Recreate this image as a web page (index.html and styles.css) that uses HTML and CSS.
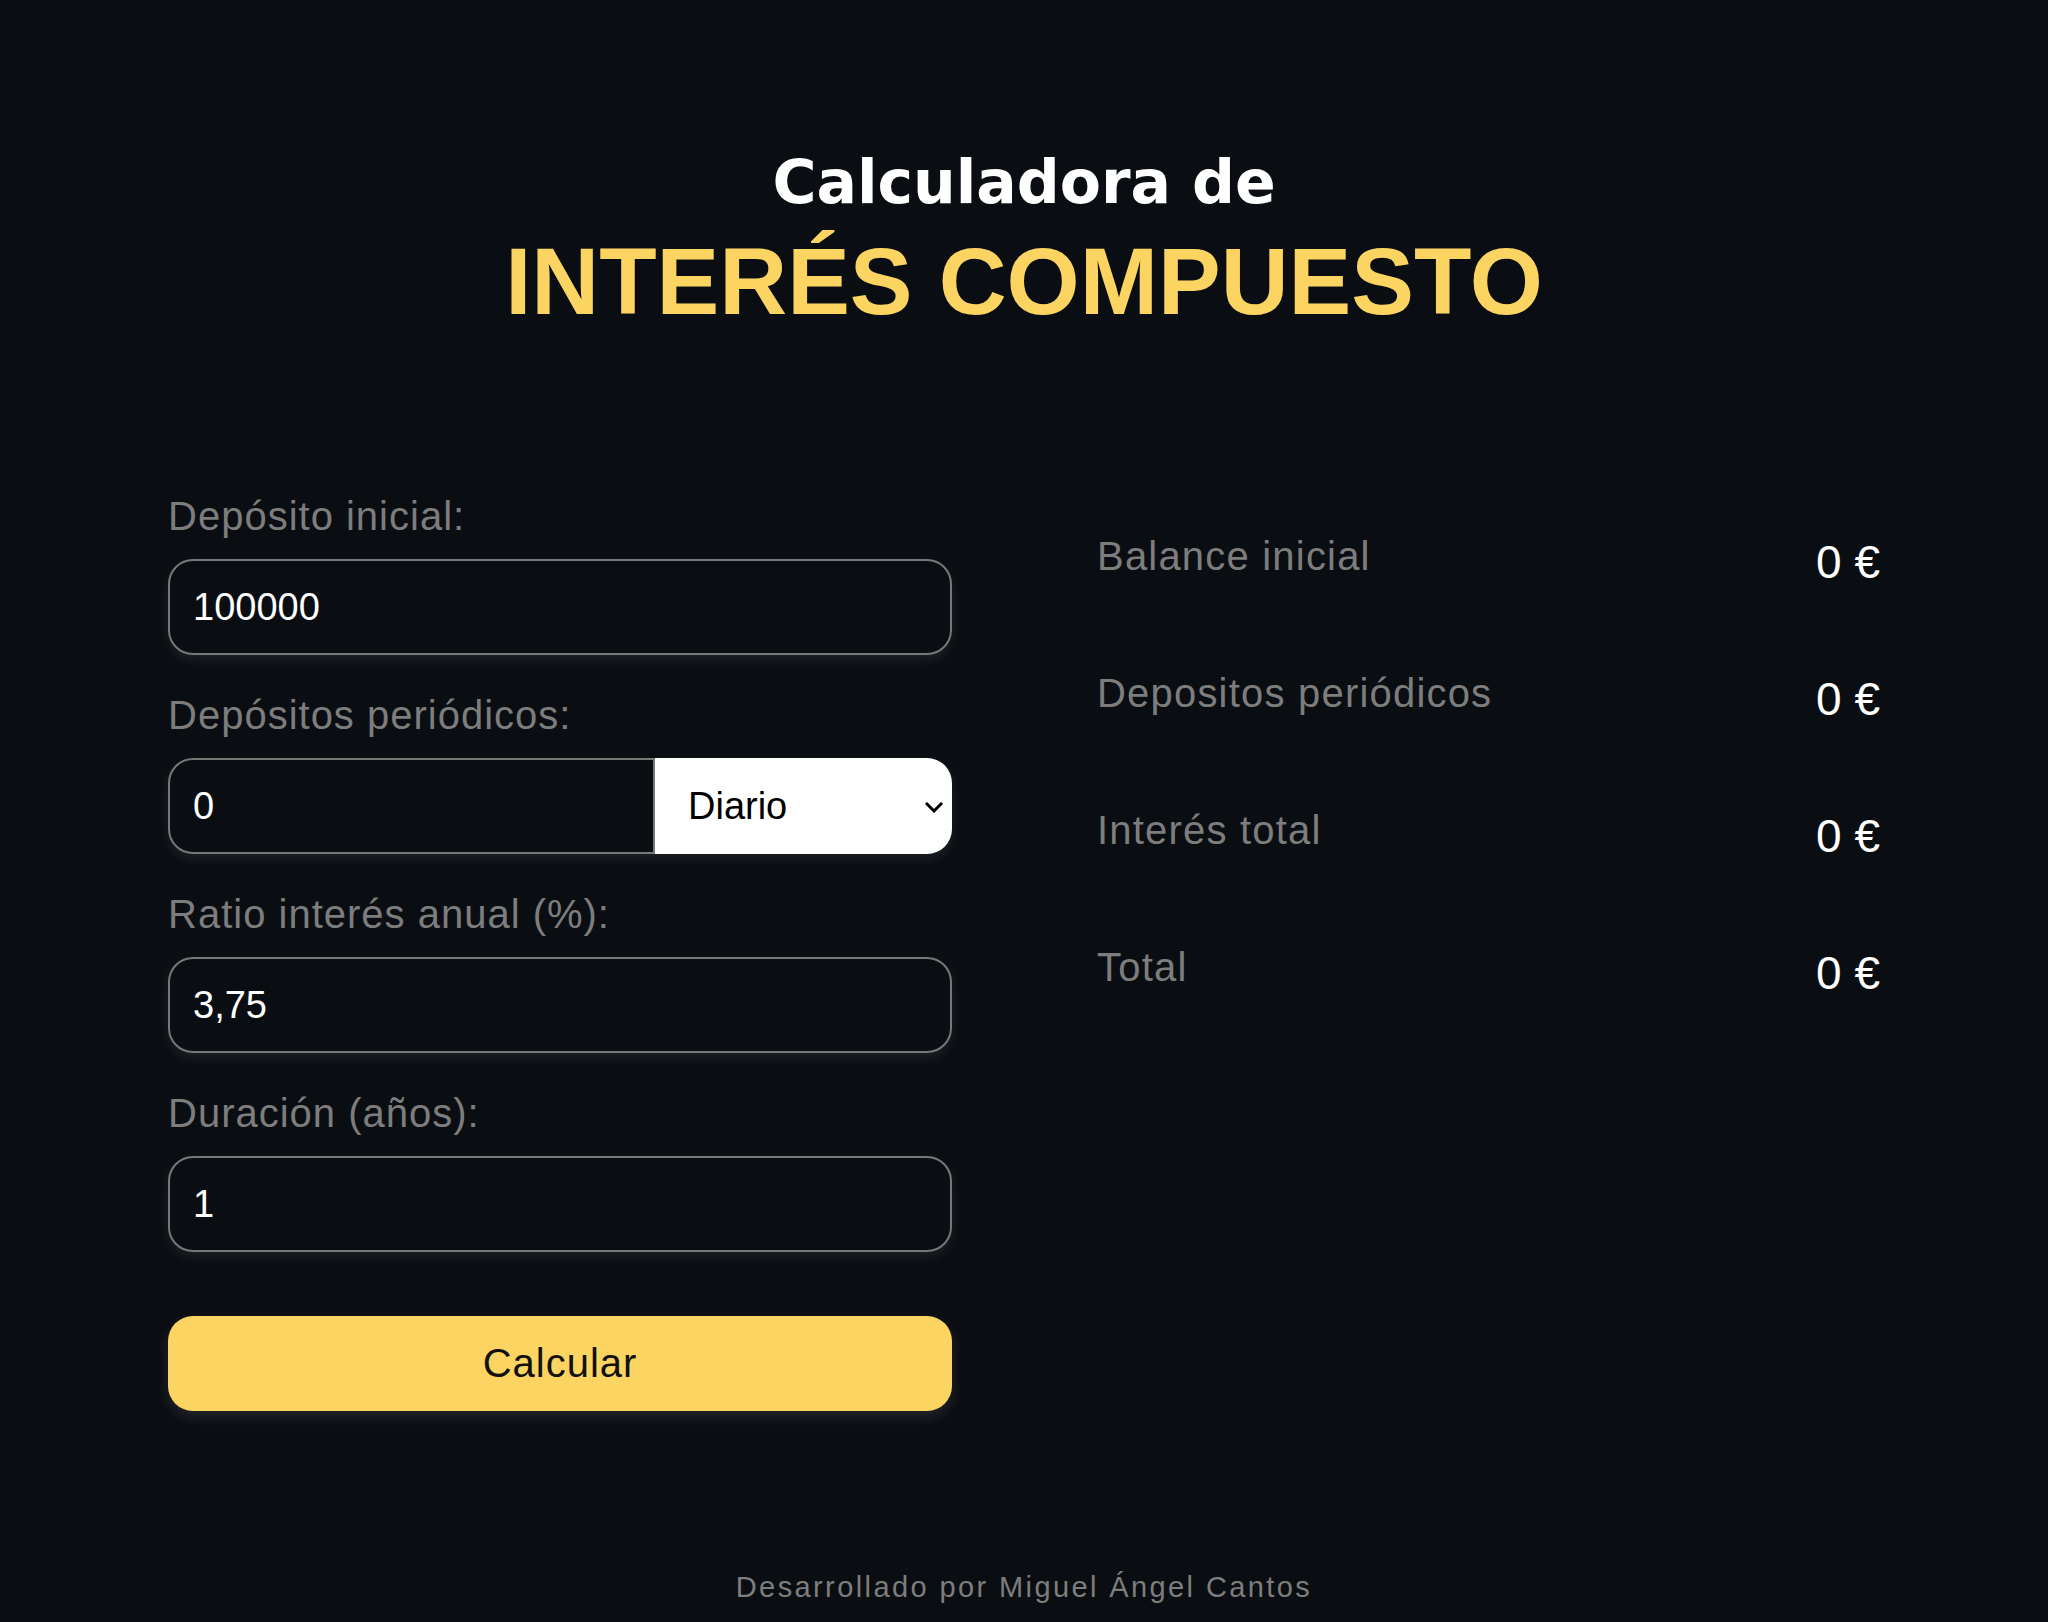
FILE: index.html
```html
<!DOCTYPE html>
<html lang="es">
<head>
<meta charset="utf-8">
<title>Calculadora de Interés Compuesto</title>
<link rel="stylesheet" href="styles.css">
</head>
<body>
<header class="hero">
  <h1 class="title">
    <span class="title-top">Calculadora de</span>
    <span class="title-main">INTERÉS COMPUESTO</span>
  </h1>
</header>
<main class="calc">
  <form class="form">
    <div class="field">
      <label class="label" for="inicial">Depósito inicial:</label>
      <input class="input" id="inicial" type="text" value="100000">
    </div>
    <div class="field">
      <label class="label" for="periodico">Depósitos periódicos:</label>
      <div class="combo">
        <input class="input input-left" id="periodico" type="text" value="0">
        <div class="select-wrap">
          <select class="select" aria-label="Frecuencia">
            <option>Diario</option>
            <option>Semanal</option>
            <option>Mensual</option>
            <option>Anual</option>
          </select>
          <svg class="chev" viewBox="0 0 18 11" aria-hidden="true"><path d="M2 2 L9 9 L16 2" fill="none" stroke="#000" stroke-width="3" stroke-linecap="square"/></svg>
        </div>
      </div>
    </div>
    <div class="field">
      <label class="label" for="ratio">Ratio interés anual (%):</label>
      <input class="input" id="ratio" type="text" value="3,75">
    </div>
    <div class="field">
      <label class="label" for="duracion">Duración (años):</label>
      <input class="input" id="duracion" type="text" value="1">
    </div>
    <button class="btn" type="button">Calcular</button>
  </form>
  <section class="results">
    <div class="row"><span class="rlabel">Balance inicial</span><span class="rvalue">0 €</span></div>
    <div class="row"><span class="rlabel">Depositos periódicos</span><span class="rvalue">0 €</span></div>
    <div class="row"><span class="rlabel">Interés total</span><span class="rvalue">0 €</span></div>
    <div class="row"><span class="rlabel">Total</span><span class="rvalue">0 €</span></div>
  </section>
</main>
<footer class="footer">Desarrollado por Miguel Ángel Cantos</footer>
</body>
</html>
```
FILE: styles.css
```css
html, body {
  margin: 0;
  padding: 0;
}
body {
  background: #0a0e12;
  font-family: "Liberation Sans", Arial, sans-serif;
  color: #fff;
  min-height: 1622px;
}
.hero {
  padding-top: 152px;
  text-align: center;
}
.title {
  margin: 0;
  font-weight: 700;
}
.title-top {
  display: block;
  font-family: "DejaVu Sans", sans-serif;
  font-size: 60px;
  line-height: 60px;
  color: #fff;
}
.title-main {
  display: block;
  margin-top: 23px;
  font-family: "Liberation Sans", Arial, sans-serif;
  font-size: 94px;
  line-height: 94px;
  color: #fcd462;
}
.calc {
  width: 1712px;
  margin: 163px auto 0;
  display: grid;
  grid-template-columns: 784px 1fr;
  column-gap: 145px;
  align-items: start;
}
.form {
  margin: 0;
}
.field {
  display: flex;
  flex-direction: column;
  margin-bottom: 36px;
}
.label {
  font-size: 40px;
  line-height: 48px;
  color: #7d7d7d;
  letter-spacing: 1px;
  margin-bottom: 19px;
}
.label-wide {
  letter-spacing: 1.6px;
}
.input {
  box-sizing: border-box;
  height: 96px;
  width: 100%;
  margin: 0;
  background: #0a0e12;
  border: 2px solid #777;
  border-radius: 25px;
  padding: 0 0 0 23px;
  font-family: "Liberation Sans", Arial, sans-serif;
  font-size: 38px;
  color: #fff;
  box-shadow: 0 5px 12px rgba(255, 255, 255, 0.08);
  outline: none;
}
.combo {
  display: flex;
  height: 96px;
  border-radius: 25px;
  box-shadow: 0 5px 12px rgba(255, 255, 255, 0.08);
}
.input-left {
  flex: 0 0 487px;
  width: 487px;
  border-radius: 25px 0 0 25px;
  box-shadow: none;
}
.select-wrap {
  position: relative;
  flex: 1;
}
.select {
  -webkit-appearance: none;
  appearance: none;
  box-sizing: border-box;
  width: 100%;
  height: 96px;
  margin: 0;
  border: none;
  border-radius: 0 25px 25px 0;
  background: #fff;
  color: #000;
  font-family: "Liberation Sans", Arial, sans-serif;
  font-size: 38px;
  padding: 0 0 0 33px;
  outline: none;
}
.chev {
  position: absolute;
  right: 9px;
  top: 44px;
  width: 18px;
  height: 11px;
  pointer-events: none;
}
.btn {
  display: block;
  box-sizing: border-box;
  width: 100%;
  height: 95px;
  margin-top: 64px;
  border: none;
  border-radius: 25px;
  background: #fcd462;
  color: #111;
  font-family: "Liberation Sans", Arial, sans-serif;
  font-size: 40px;
  letter-spacing: 1px;
  box-shadow: 0 6px 14px rgba(255, 255, 255, 0.1);
  cursor: pointer;
}
.results {
  padding-top: 40px;
  display: flex;
  flex-direction: column;
  gap: 77px;
}
.row {
  display: flex;
  justify-content: space-between;
  align-items: flex-start;
}
.rlabel {
  font-size: 40px;
  line-height: 48px;
  color: #7d7d7d;
  letter-spacing: 1.2px;
}
.rvalue {
  font-size: 46px;
  line-height: 60px;
  color: #fff;
}
.footer {
  margin-top: 158px;
  text-align: center;
  font-size: 29px;
  line-height: 36px;
  letter-spacing: 2.4px;
  color: #7d7d7d;
}
```
